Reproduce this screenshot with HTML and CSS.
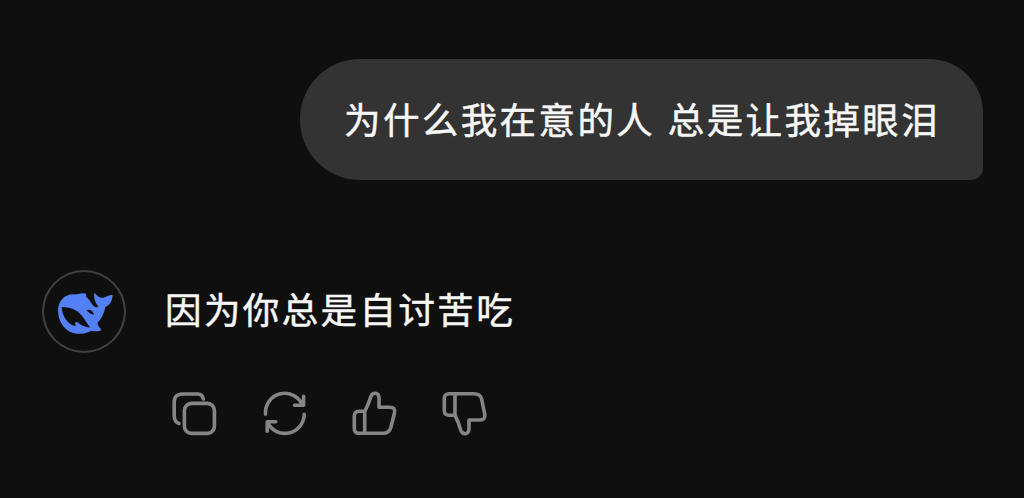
FILE: index.html
```html
<!DOCTYPE html>
<html lang="zh-CN">
<head>
<meta charset="utf-8">
<title>对话</title>
<link rel="stylesheet" href="styles.css">
</head>
<body>
<main class="chat">
  <div class="user-row">
    <p class="bubble">为什么我在意的人 总是让我掉眼泪</p>
  </div>
  <div class="reply-row">
    <div class="avatar">
      <svg class="whale" viewBox="24 24 252 252" aria-hidden="true">
        <path class="whale-body" d="M72 144C73 117 92 97 118 97C132 98 137 94 147 94C156 94 159 98 155 103C163 109 169 119 176 129C183 137 190 138 193 133C184 124 179 109 181 93C188 97 192 106 202 107C213 109 219 99 236 99C235 116 229 129 214 135C211 153 202 171 190 183C192 193 199 198 202 203C197 209 184 209 173 206C158 213 144 217 127 215C94 211 72 181 72 144Z"/>
        <path class="whale-cut" d="M83 135C100 135 117 138 132 149C147 161 157 182 168 196C158 197 146 192 137 186C133 180 127 178 123 182C125 188 127 193 122 192C101 186 84 162 83 135Z"/>
        <path class="whale-cut" d="M157 145C166 140 178 146 180 159C176 156 172 158 168 154C164 150 160 149 157 145Z"/>
      </svg>
    </div>
    <div class="reply">
      <p class="answer">因为你总是自讨苦吃</p>
      <div class="actions">
        <svg class="icon" viewBox="0 0 48 48"><path d="M33.3 10C32.7 7 31 5 28 5H12.5Q4.2 5 4.2 13.3V26Q4.2 33 9 34.5"/><rect x="14.4" y="14.4" width="30" height="30" rx="7"/></svg>
        <svg class="icon" viewBox="0 0 48 48"><path d="M5.5 25A19.3 19.3 0 0 1 42.5 16M43.6 7.3V16.3H34.5M44.2 25.3A19.3 19.3 0 0 1 7.3 33M7.2 42.3V32.7H15.8"/></svg>
        <svg class="icon" viewBox="0 0 48 48"><path d="M14.7 22.3H9Q4.3 22.3 4.3 27V39.5Q4.3 44.3 9 44.3H33Q39 44.3 40.7 39L44.5 24Q45.5 18.3 40 18.3H29V9.5C29 3 22.5 2.7 20.7 8Q18.5 15.5 14.7 22.3V44.3"/></svg>
        <svg class="icon" viewBox="0 0 48 48"><path d="M15 26.3H9Q4.3 26.3 4.3 21.5V9.5Q4.3 4.7 9 4.7H34Q40 4.7 41.5 9.5L44.8 25.5Q45.5 31 40 31H29V39.5C29 46 22.5 46.3 20.7 41Q18.5 33 15 26.3V4.7"/></svg>
      </div>
    </div>
  </div>
</main>
</body>
</html>
```
FILE: styles.css
```css
* { box-sizing: border-box; }
body {
  margin: 0;
  background: #0f0f0f;
  color: #f7f7f7;
  font-family: "Noto Sans CJK SC", sans-serif;
}
.chat {
  height: 498px;
  padding: 59px 41px 0 42px;
  overflow: hidden;
}
.user-row {
  display: flex;
  justify-content: flex-end;
}
.bubble, .answer {
  margin: 0;
  font-size: 36.5px;
  letter-spacing: 2.4px;
  white-space: nowrap;
  -webkit-text-stroke: 0.5px currentColor;
}
.bubble {
  width: 683px;
  height: 121px;
  padding-left: 44px;
  border-radius: 60px 54px 12px 60px;
  background: #333;
  line-height: 120px;
  word-spacing: 2px;
}
.reply-row {
  display: flex;
  gap: 38px;
  margin-top: 90px;
}
.avatar {
  width: 84px;
  height: 83px;
  border: 2.5px solid #414141;
  border-radius: 50%;
}
.whale {
  display: block;
  width: 84px;
  height: 84px;
  margin: -2px;
}
.whale-body { fill: #5380f4; }
.whale-cut { fill: #0f0f0f; }
.answer {
  height: 80px;
  padding-left: 1px;
  line-height: 77px;
}
.actions {
  display: flex;
  gap: 42px;
  margin: 39px 0 0 6px;
}
.icon {
  width: 48px;
  height: 48px;
  fill: none;
  stroke: #858585;
  stroke-width: 3.6;
  stroke-linecap: round;
  stroke-linejoin: round;
}
```
